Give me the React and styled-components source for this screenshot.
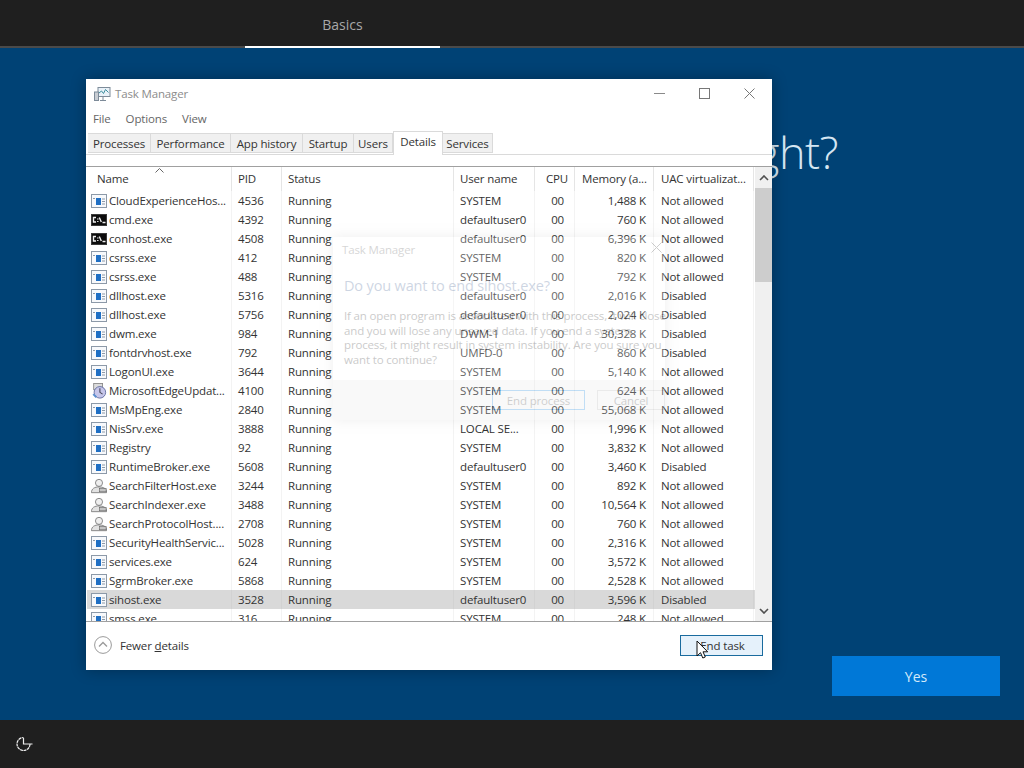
import React from 'react'
import styled, { createGlobalStyle } from 'styled-components'

const GlobalStyle = createGlobalStyle`
  html, body { margin: 0; padding: 0; height: 100%; overflow: hidden; background: #004275; }
  #root { height: 100%; }
  * { box-sizing: border-box; }
`

const NA = 'Not allowed'
const DIS = 'Disabled'
const DU = 'defaultuser0'
const SY = 'SYSTEM'

const rows = [
  ['app', 'CloudExperienceHos...', '4536', SY, '1,488 K', NA],
  ['con', 'cmd.exe', '4392', DU, '760 K', NA],
  ['con', 'conhost.exe', '4508', DU, '6,396 K', NA],
  ['app', 'csrss.exe', '412', SY, '820 K', NA],
  ['app', 'csrss.exe', '488', SY, '792 K', NA],
  ['app', 'dllhost.exe', '5316', DU, '2,016 K', DIS],
  ['app', 'dllhost.exe', '5756', DU, '2,024 K', DIS],
  ['app', 'dwm.exe', '984', 'DWM-1', '30,328 K', DIS],
  ['app', 'fontdrvhost.exe', '792', 'UMFD-0', '860 K', DIS],
  ['app', 'LogonUI.exe', '3644', SY, '5,140 K', NA],
  ['edge', 'MicrosoftEdgeUpdat...', '4100', SY, '624 K', NA],
  ['app', 'MsMpEng.exe', '2840', SY, '55,068 K', NA],
  ['app', 'NisSrv.exe', '3888', 'LOCAL SE...', '1,996 K', NA],
  ['app', 'Registry', '92', SY, '3,832 K', NA],
  ['app', 'RuntimeBroker.exe', '5608', DU, '3,460 K', DIS],
  ['search', 'SearchFilterHost.exe', '3244', SY, '892 K', NA],
  ['search', 'SearchIndexer.exe', '3488', SY, '10,564 K', NA],
  ['search', 'SearchProtocolHost....', '2708', SY, '760 K', NA],
  ['app', 'SecurityHealthServic...', '5028', SY, '2,316 K', NA],
  ['app', 'services.exe', '624', SY, '3,572 K', NA],
  ['app', 'SgrmBroker.exe', '5868', SY, '2,528 K', NA],
  ['app', 'sihost.exe', '3528', DU, '3,596 K', DIS],
  ['app', 'smss.exe', '316', SY, '248 K', NA],
]

const tabs = [
  ['Processes', 63],
  ['Performance', 80],
  ['App history', 72],
  ['Startup', 51],
  ['Users', 39],
  ['Details', 50],
  ['Services', 50],
]

const ProcessIcon = ({ type }) => {
  if (type === 'con') {
    return (
      <svg width="16" height="16" viewBox="0 0 16 16">
        <rect x="0.5" y="2.500" width="15" height="11" fill="#0c0c0c" stroke="#3a3a3a" />
        <path d="M5 5.500H2.500v4.500H5M6.800 6.500v.9M6.800 9v.9M8.300 5.500l2 4.500M11.500 10.500h3" fill="none" stroke="#f0f0f0" strokeWidth="1.400" />
      </svg>
    )
  }
  if (type === 'search') {
    return (
      <svg width="18" height="18" viewBox="0 0 18 18">
        <circle cx="9" cy="5.500" r="4" fill="#efefef" stroke="#7c7c7c" />
        <path d="M0.500 16.500c0-4.500 3.500-6.500 8.500-6.500s7.500 2 8.500 4v2.500z" fill="#e2e2e2" stroke="#7c7c7c" />
        <rect x="9.500" y="12" width="7.500" height="3.500" fill="#c4c4c4" stroke="#666" strokeWidth="0.700" />
      </svg>
    )
  }
  if (type === 'edge') {
    return (
      <svg width="18" height="18" viewBox="0 0 18 18">
        <rect x="3" y="0.500" width="10" height="7" fill="#dcdcdc" stroke="#8a8a8a" />
        <circle cx="10" cy="10.500" r="6.500" fill="#c6c6ea" stroke="#5f6a9e" />
        <path d="M10 6v4.500l3 2" fill="none" stroke="#445" strokeWidth="1.200" />
        <path d="M2.500 12.500l3.500 3.500" stroke="#5a8fd0" strokeWidth="2.200" />
      </svg>
    )
  }
  return (
    <svg width="16" height="16" viewBox="0 0 16 16">
      <rect x="0.5" y="1.500" width="15" height="13" fill="#f7f9fc" stroke="#8c99a8" />
      <rect x="5" y="5" width="5" height="7" fill="#1f6fc4" />
      <path d="M2 5.500h2M11 6h3M11 8.500h3M11 11h3" stroke="#8c99a8" />
    </svg>
  )
}

const Page = styled.div`
  width: 1024px;
  height: 768px;
  display: flex;
  flex-direction: column;
  font-family: "Open Sans", "Noto Sans", sans-serif;
`
const TopBar = styled.header`
  height: 48px;
  flex: none;
  background: #1f1f1f;
  border-bottom: 2px solid #4a4a4a;
  padding-left: 245px;
  display: flex;
`
const StepTab = styled.div`
  width: 195px;
  height: 48px;
  border-bottom: 2px solid #fff;
  color: #a8a8a8;
  font-size: 14px;
  display: flex;
  align-items: center;
  justify-content: center;
  padding-top: 3px;
`
const Stage = styled.main`
  flex: 1;
  position: relative;
  background: #004275;
  display: flex;
  flex-direction: column;
  align-items: flex-end;
  padding: 73px 24px 24px 0;
`
const Heading = styled.h1`
  margin: 0 162px 0 0;
  color: #d5e6f2;
  font-size: 45px;
  font-weight: 300;
  line-height: 62px;
  letter-spacing: -0.5px;
`
const YesButton = styled.button`
  margin-top: auto;
  width: 168px;
  height: 40px;
  border: none;
  background: #0078d7;
  color: #d4eafa;
  font: 14px "Open Sans", sans-serif;
`
const BottomBar = styled.footer`
  height: 48px;
  flex: none;
  background: #1f1f1f;
  display: flex;
  align-items: center;
  padding-left: 16px;
`

// task manager window floats over the setup page
const Window = styled.section`
  position: absolute;
  left: 86px;
  top: 31px;
  width: 686px;
  height: 591px;
  background: #fff;
  display: flex;
  flex-direction: column;
  font-size: 11.5px;
  letter-spacing: -0.15px;
  color: #333;
  box-shadow: 0 0 14px rgba(0, 0, 0, 0.3);
`
const TitleBar = styled.div`
  height: 29px;
  flex: none;
  display: flex;
  align-items: center;
  padding-left: 8px;
  color: #8c8c8c;
  gap: 4px;
`
const TitleControls = styled.div`
  margin-left: auto;
  display: flex;
  align-items: center;
`
const ControlSlot = styled.div`
  width: 45px;
  height: 29px;
  display: flex;
  align-items: center;
  justify-content: center;
`
const MenuBar = styled.nav`
  height: 20px;
  flex: none;
  display: flex;
  align-items: center;
  gap: 15px;
  padding-left: 7px;
  color: #666;
`
const TabStrip = styled.div`
  height: 27px;
  flex: none;
  display: flex;
  align-items: flex-end;
  padding: 0 0 1px 2px;
  border-bottom: 1px solid #dadada;
`
const Tab = styled.div`
  width: ${(props) => props.$width}px;
  height: ${(props) => (props.$active ? '24px' : '20px')};
  margin-bottom: ${(props) => (props.$active ? '-2px' : '0')};
  padding-bottom: ${(props) => (props.$active ? '5px' : '0')};
  background: ${(props) => (props.$active ? '#fff' : '#f0f0f0')};
  border: 1px solid #dadada;
  border-left-width: ${(props) => (props.$active ? '1px' : '0')};
  border-bottom-width: ${(props) => (props.$active ? '0' : '1px')};
  display: flex;
  align-items: center;
  justify-content: center;
  position: relative;
  z-index: ${(props) => (props.$active ? 1 : 0)};
`
const TabGap = styled.div`
  height: 11px;
  flex: none;
`
const TableArea = styled.div`
  flex: 1;
  min-height: 0;
  display: flex;
  border-top: 1px solid #a0a0a0;
  border-bottom: 1px solid #a0a0a0;
  padding-left: 1px;
  overflow: hidden;
`
const Table = styled.div`
  width: 668px;
  flex: none;
  overflow: hidden;
`
const Grid = styled.div`
  display: grid;
  grid-template-columns: 145px 50px 172px 81px 40px 79px 100px;
  height: ${(props) => props.$height};
  background: ${(props) => (props.$selected ? '#d9d9d9' : 'transparent')};
`
const HeadCell = styled.div`
  position: relative;
  display: flex;
  align-items: center;
  padding: 0 6px 1px ${(props) => props.$left || '6px'};
  justify-content: ${(props) => (props.$right ? 'flex-end' : 'flex-start')};
  border-right: 1px solid #e5e5e5;
  white-space: nowrap;
  overflow: hidden;
`
const SortMark = styled.svg`
  position: absolute;
  left: 68px;
  top: 1px;
`
const Cell = styled.div`
  display: flex;
  align-items: center;
  gap: ${(props) => (props.$icon ? '2px' : '0')};
  padding: 0 ${(props) => props.$pr || '6px'} 0 ${(props) => props.$pl || '6px'};
  justify-content: ${(props) => (props.$right ? 'flex-end' : 'flex-start')};
  border-right: 1px solid ${(props) => (props.$selected ? '#d2d2d2' : '#f3f3f3')};
  white-space: nowrap;
  overflow: hidden;
`
const IconSlot = styled.span`
  width: 16px;
  height: 18px;
  flex: none;
  display: flex;
  align-items: center;
  justify-content: center;
`
const ScrollBar = styled.div`
  flex: 1;
  background: #f0f0f0;
  display: flex;
  flex-direction: column;
  align-items: center;
`
const ScrollArrow = styled.div`
  height: 21px;
  flex: none;
  display: flex;
  align-items: center;
  justify-content: center;
`
const ScrollThumb = styled.div`
  width: 100%;
  height: 94px;
  flex: none;
  background: #cdcdcd;
`
const ScrollSpace = styled.div`
  flex: 1;
`
const WindowFooter = styled.div`
  height: 48px;
  flex: none;
  display: flex;
  align-items: center;
  padding: 0 9px 2px 8px;
`
const FewerDetails = styled.div`
  display: flex;
  align-items: center;
  gap: 8px;
`
const Mnemonic = styled.span`
  text-decoration: underline;
`
const EndTask = styled.button`
  position: relative;
  margin-left: auto;
  width: 83px;
  height: 21px;
  background: #e5f1fb;
  border: 1px solid #1a6b9e;
  color: #333;
  font: 11.5px "Open Sans", sans-serif;
  letter-spacing: -0.15px;
  padding: 0 0 0 2px;
`
const Cursor = styled.svg`
  position: absolute;
  left: 15px;
  top: 4px;
`
// confirmation dialog, caught mid fade-in
const Dialog = styled.div`
  position: absolute;
  left: 247px;
  top: 158px;
  width: 332px;
  height: 183px;
  background: #fff;
  opacity: 0.24;
  display: flex;
  flex-direction: column;
  box-shadow: 0 0 12px rgba(0, 0, 0, 0.25);
`
const DialogTitle = styled.div`
  height: 26px;
  flex: none;
  padding: 5px 3px 0 9px;
  color: #555;
  display: flex;
  justify-content: space-between;
`
const DialogBody = styled.div`
  flex: 1;
  padding: 13px 0 0 11px;
`
const DialogQuestion = styled.div`
  font-size: 14.5px;
  color: #34558a;
  margin-bottom: 14px;
`
const DialogText = styled.div`
  line-height: 14.5px;
  color: #222;
  white-space: nowrap;
`
const DialogActions = styled.div`
  height: 40px;
  flex: none;
  background: #e8e8e8;
  display: flex;
  align-items: center;
  justify-content: flex-end;
  gap: 12px;
  padding: 0 0 0 8px;
`
const DialogButton = styled.div`
  width: ${(props) => props.$width};
  height: 20px;
  border: 1px solid ${(props) => (props.$primary ? '#0078d7' : '#aaa')};
  display: flex;
  align-items: center;
  justify-content: center;
`

const App = () => {
  return (
    <Page>
      <GlobalStyle />
      <TopBar>
        <StepTab>Basics</StepTab>
      </TopBar>
      <Stage>
        <Heading>Is this right?</Heading>
        <YesButton>Yes</YesButton>

        <Window>
          <TitleBar>
            <svg width="17" height="16" viewBox="0 0 17 16">
              <rect x="4" y="1.500" width="12" height="9" fill="#e9f1f8" stroke="#7d8b99" />
              <path d="M5 7l2.500-2 2 2.500 2-4 3 3" fill="none" stroke="#3d8f9f" />
              <rect x="0.500" y="6" width="4" height="8.500" fill="#c9ced4" stroke="#7d8b99" />
              <path d="M6 14.500h6M9 10.500v4" stroke="#7d8b99" />
            </svg>
            Task Manager
            <TitleControls>
              <ControlSlot>
                <svg width="11" height="11" viewBox="0 0 11 11"><path d="M0 5.500h11" stroke="#8a8a8a" /></svg>
              </ControlSlot>
              <ControlSlot>
                <svg width="11" height="11" viewBox="0 0 11 11"><rect x="0.500" y="0.500" width="10" height="10" fill="none" stroke="#777" /></svg>
              </ControlSlot>
              <ControlSlot>
                <svg width="11" height="11" viewBox="0 0 11 11"><path d="M0.500 0.500l10 10M10.500 0.500l-10 10" stroke="#777" /></svg>
              </ControlSlot>
            </TitleControls>
          </TitleBar>
          <MenuBar>
            <span>File</span>
            <span>Options</span>
            <span>View</span>
          </MenuBar>
          <TabStrip>
            {tabs.map(([label, width]) => (
              <Tab key={label} $width={width} $active={label === 'Details'}>{label}</Tab>
            ))}
          </TabStrip>
          <TabGap />
          <TableArea>
            <Table>
              <Grid $height="24px">
                <HeadCell $left="10px">
                  Name
                  <SortMark width="9" height="5" viewBox="0 0 9 5"><path d="M0.500 4.500l4-4 4 4" fill="none" stroke="#666" /></SortMark>
                </HeadCell>
                <HeadCell>PID</HeadCell>
                <HeadCell>Status</HeadCell>
                <HeadCell>User name</HeadCell>
                <HeadCell $right>CPU</HeadCell>
                <HeadCell $left="7px">Memory (a...</HeadCell>
                <HeadCell $left="7px">UAC virtualizat...</HeadCell>
              </Grid>
              {rows.map((r, i) => {
                const selected = r[1] === 'sihost.exe'
                return (
                  <Grid key={i} $height="19px" $selected={selected}>
                    <Cell $icon $pl="4px" $pr="0" $selected={selected}>
                      <IconSlot><ProcessIcon type={r[0]} /></IconSlot>
                      {r[1]}
                    </Cell>
                    <Cell $selected={selected}>{r[2]}</Cell>
                    <Cell $selected={selected}>Running</Cell>
                    <Cell $selected={selected}>{r[3]}</Cell>
                    <Cell $right $pr="10px" $selected={selected}>00</Cell>
                    <Cell $right $pr="7px" $selected={selected}>{r[4]}</Cell>
                    <Cell $pl="7px" $selected={selected}>{r[5]}</Cell>
                  </Grid>
                )
              })}
            </Table>
            <ScrollBar>
              <ScrollArrow>
                <svg width="10" height="6" viewBox="0 0 10 6"><path d="M1 5l4-4 4 4" fill="none" stroke="#505050" strokeWidth="1.600" /></svg>
              </ScrollArrow>
              <ScrollThumb />
              <ScrollSpace />
              <ScrollArrow>
                <svg width="10" height="6" viewBox="0 0 10 6"><path d="M1 1l4 4 4-4" fill="none" stroke="#505050" strokeWidth="1.600" /></svg>
              </ScrollArrow>
            </ScrollBar>
          </TableArea>
          <WindowFooter>
            <FewerDetails>
              <svg width="18" height="18" viewBox="0 0 18 18">
                <circle cx="9" cy="9" r="8.400" fill="#fff" stroke="#9a9a9a" />
                <path d="M5 10.500l4-4 4 4" fill="none" stroke="#9a9a9a" strokeWidth="1.300" />
              </svg>
              <span>Fewer <Mnemonic>d</Mnemonic>etails</span>
            </FewerDetails>
            <EndTask>
              End task
              <Cursor width="13" height="20" viewBox="0 0 13 20">
                <path d="M1 1v15l3.500-3.300 2.300 5.300 2.500-1-2.300-5.200h4.700z" fill="#fff" stroke="#111" strokeWidth="1" />
              </Cursor>
            </EndTask>
          </WindowFooter>

          <Dialog>
            <DialogTitle>
              Task Manager
              <svg width="11" height="11" viewBox="0 0 11 11"><path d="M0.500 0.500l10 10M10.500 0.500l-10 10" stroke="#333" /></svg>
            </DialogTitle>
            <DialogBody>
              <DialogQuestion>Do you want to end sihost.exe?</DialogQuestion>
              <DialogText>
                If an open program is associated with this process, it will close<br />
                and you will lose any unsaved data. If you end a system<br />
                process, it might result in system instability. Are you sure you<br />
                want to continue?
              </DialogText>
            </DialogBody>
            <DialogActions>
              <DialogButton $primary $width="93px">End process</DialogButton>
              <DialogButton $width="68px">Cancel</DialogButton>
            </DialogActions>
          </Dialog>
        </Window>
      </Stage>
      <BottomBar>
        <svg width="18" height="18" viewBox="0 0 18 18">
          <path d="M14 9a6.500 6.500 0 1 1-6.500-6.500" fill="none" stroke="#eee" strokeWidth="1.200" strokeDasharray="3 0.500" />
          <path d="M7.500 3v6h9" fill="none" stroke="#eee" strokeWidth="1.200" />
        </svg>
      </BottomBar>
    </Page>
  )
}

export default App
